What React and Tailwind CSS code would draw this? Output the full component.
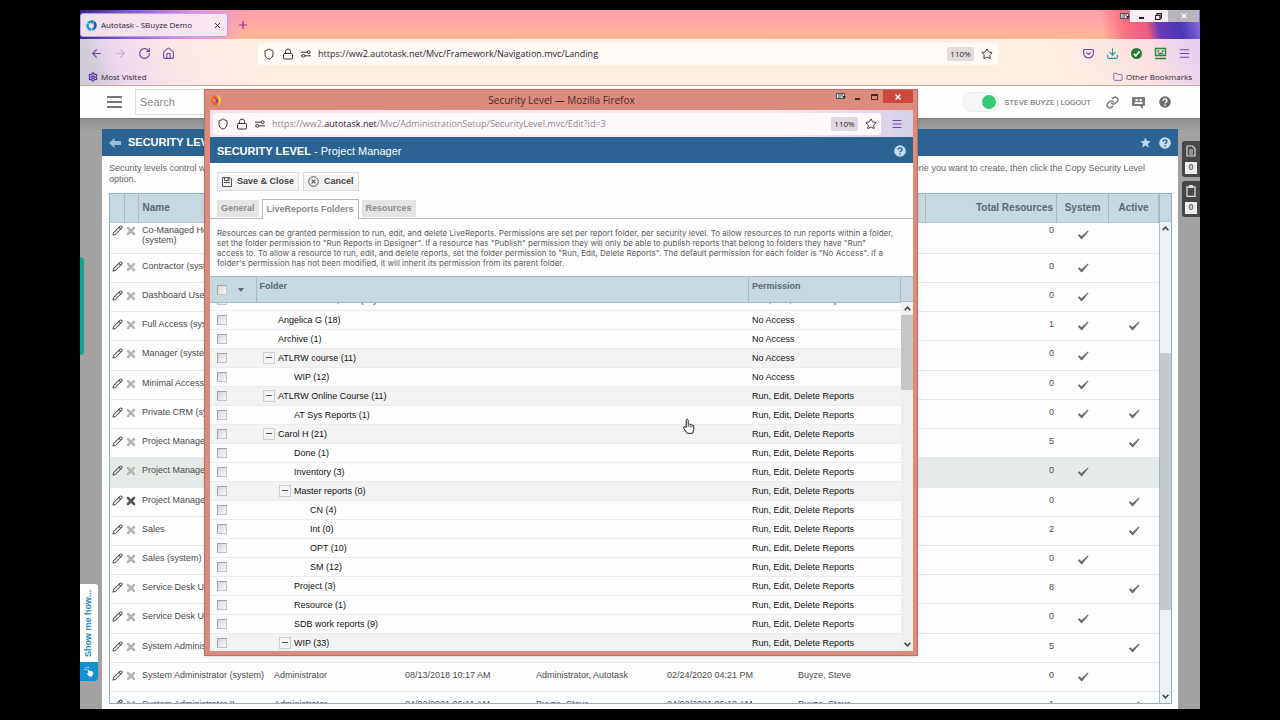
import {
  ArrowLeft,
  ArrowRight,
  Download,
  Folder,
  House,
  Link,
  Lock,
  Menu,
  Pencil,
  Plus,
  RotateCw,
  Settings,
  Shield,
  Star,
  X,
} from "lucide-react";

const levels = [
  { name: "Co-Managed Help Desk", second: "(system)", total: 0, system: true },
  { name: "Contractor (system)", total: 0, system: true },
  { name: "Dashboard User (system)", total: 0, system: true },
  { name: "Full Access (system)", total: 1, system: true, active: true },
  { name: "Manager (system)", total: 0, system: true },
  { name: "Minimal Access (system)", total: 0, system: true },
  { name: "Private CRM (system)", total: 0, system: true, active: true },
  { name: "Project Manager", total: 5, active: true },
  { name: "Project Manager (system)", total: 0, system: true, selected: true },
  { name: "Project Manager", total: 0, active: true, removable: true },
  { name: "Sales", total: 2, active: true },
  { name: "Sales (system)", total: 0, system: true },
  { name: "Service Desk User", total: 8, active: true },
  { name: "Service Desk User (system)", total: 0, system: true },
  { name: "System Administrator", total: 5, active: true },
  {
    name: "System Administrator (system)",
    cells: ["Administrator", "08/13/2018 10:17 AM", "Administrator, Autotask", "02/24/2020 04:21 PM", "Buyze, Steve"],
    total: 0,
    system: true,
  },
  {
    name: "System Administrator II",
    cells: ["Administrator", "04/02/2021 06:11 AM", "Buyze, Steve", "04/02/2021 06:12 AM", "Buyze, Steve"],
    total: 1,
    active: true,
  },
];

const RUN = "Run, Edit, Delete Reports";
const NONE = "No Access";

const folders = [
  { name: "Allends is First, Gid. (10)", depth: 0, permission: RUN },
  { name: "Angelica G (18)", depth: 0, permission: NONE },
  { name: "Archive (1)", depth: 0, permission: NONE },
  { name: "ATLRW course (11)", depth: 0, permission: NONE, open: true },
  { name: "WIP (12)", depth: 1, permission: NONE },
  { name: "ATLRW Online Course (11)", depth: 0, permission: RUN, open: true },
  { name: "AT Sys Reports (1)", depth: 1, permission: RUN },
  { name: "Carol H (21)", depth: 0, permission: RUN, open: true },
  { name: "Done (1)", depth: 1, permission: RUN },
  { name: "Inventory (3)", depth: 1, permission: RUN },
  { name: "Master reports (0)", depth: 1, permission: RUN, open: true },
  { name: "CN (4)", depth: 2, permission: RUN },
  { name: "Int (0)", depth: 2, permission: RUN },
  { name: "OPT (10)", depth: 2, permission: RUN },
  { name: "SM (12)", depth: 2, permission: RUN },
  { name: "Project (3)", depth: 1, permission: RUN },
  { name: "Resource (1)", depth: 1, permission: RUN },
  { name: "SDB work reports (9)", depth: 1, permission: RUN },
  { name: "WIP (33)", depth: 1, permission: RUN, open: true },
];

const indent = ["pl-[7px]", "pl-[23px]", "pl-[39px]"];

const checkboxClass =
  "block size-[10px] appearance-none border border-[#a2a2a2] border-r-[#c4c4c4] border-b-[#c4c4c4] bg-gradient-to-br from-[#d6d6d8] to-[#f8f8f8]";

function CheckMark() {
  return (
    <svg className="mx-auto h-[10px] w-3" viewBox="0 0 12 10" fill="#6b6b6b">
      <path d="M.8 5.2 2.4 4.2 4.4 6.2 10.8 .6 11.6 1.2 5 9.2H4.2Z" />
    </svg>
  );
}

function HelpIcon({ className, mark }) {
  return (
    <svg className={className} viewBox="0 0 12 12">
      <circle cx="6" cy="6" r="5.8" fill="currentColor" />
      <path d="M4.1 4.7C4.1 2.3 8 2.3 8 4.5 8 5.9 6.1 5.8 6.1 7.3" fill="none" stroke={mark} strokeWidth="1.4" />
      <circle cx="6.1" cy="9" r=".85" fill={mark} />
    </svg>
  );
}

function PermissionsIcon() {
  return (
    <svg className="h-2 w-[10px] shrink-0" viewBox="0 0 10 8" fill="none" stroke="#333" strokeWidth="1">
      <path d="M0 2.2H6M4 5.8H10M0 5.8H1" />
      <circle cx="7.7" cy="2.2" r="1.4" />
      <circle cx="2.4" cy="5.8" r="1.4" />
    </svg>
  );
}

function KeyboardIcon() {
  return (
    <svg className="h-[7px] w-[10px]" viewBox="0 0 10 7">
      <rect x=".5" y=".5" width="8" height="5" fill="#ddd" stroke="#555" />
      <path d="M2 2H7M2 4H5" stroke="#555" />
      <path d="M6 3 10 3 8 6Z" fill="#333" />
    </svg>
  );
}

function Chevron({ down }) {
  return (
    <svg className="h-[5px] w-[7px]" viewBox="0 0 7 5" fill="none" stroke="#444" strokeWidth="1.6">
      <path d={down ? "M.6 .8 3.5 3.8 6.4 .8" : "M.6 4.2 3.5 1.2 6.4 4.2"} />
    </svg>
  );
}

function BrowserChrome() {
  return (
    <div className="shrink-0 font-['Open_Sans','Noto_Sans',sans-serif] text-[8px] text-[#2b2233]">
      {/* Tab strip */}
      <div className="flex h-[29px] items-start bg-[linear-gradient(100deg,#2f2a80_0,#8a62d8_5%,#e58fdc_10%,rgba(255,160,175,0)_15%),linear-gradient(78deg,rgba(255,160,175,0)_91%,#fb6f80_93%,#ee5a7e_95%,#6a3ab5_96%,#4a36b8_98%,#8d6fe4_100%),linear-gradient(#ff9dae,#ffb795)]">
        <div className="mt-[3px] flex h-6 w-[148px] items-center rounded-[3px] border border-[#b9a0ec] bg-[#fbe9f0]/95 pr-[5px] pl-[5px]">
          <svg className="size-[11px]" viewBox="0 0 11 11" fill="none" strokeWidth="2.6">
            <circle cx="5.5" cy="5.5" r="3.9" stroke="#1d9ad6" />
            <path d="M5.5 1.6A3.9 3.9 0 0 1 8.2 8.2" stroke="#1b62ae" />
            <path d="M0 3 3 4M8 .5 7 4M6 11 5 8" stroke="#dcecf8" strokeWidth=".7" />
          </svg>
          <span className="ml-1 whitespace-nowrap">Autotask - SBuyze Demo</span>
          <button aria-label="Close tab" className="ml-auto">
            <X className="size-[9px]" strokeWidth={2.4} />
          </button>
        </div>
        <button aria-label="New tab" className="mt-[9px] ml-[9px] text-[#9a2fa8]">
          <Plus className="size-3" strokeWidth={2.4} />
        </button>
        <div className="ml-auto flex h-3 items-center pr-px">
          <KeyboardIcon />
          <div className="flex h-3 w-[38px] items-center justify-between bg-[#f6eef2] pr-[6px] pl-[9px]">
            <button aria-label="Minimize" className="mt-1 h-[2px] w-[5px] bg-[#222]" />
            <button aria-label="Restore">
              <svg className="size-[7px]" viewBox="0 0 7 7" fill="none" stroke="#222">
                <path d="M.5 2.5H5V6.5H.5ZM2 2.5V.7H6.5V5H5" strokeWidth="1.2" />
              </svg>
            </button>
          </div>
          <button aria-label="Close window" className="flex h-3 w-[31px] items-center justify-center bg-[#b9b5bc] text-white">
            <X className="size-2" strokeWidth={3.5} />
          </button>
        </div>
      </div>

      {/* Toolbar and bookmarks */}
      <div className="border-b border-[#c9a79b] bg-[linear-gradient(68deg,#cfccd6_0,#d2cdd9_2%,rgba(236,214,240,0.9)_4%,rgba(252,226,232,0.8)_9%,rgba(252,239,226,0)_18%),linear-gradient(65deg,#fdf0e2_86%,#fbdfe2_95%,#e2cdf3_100%)]">
        <div className="flex h-[29px] items-center">
          <div className="flex w-[178px] items-center gap-[11px] pl-[10px] text-[#6a45a6]">
            <ArrowLeft className="size-[13px]" />
            <ArrowRight className="size-[13px] opacity-30" />
            <RotateCw className="size-[13px]" />
            <House className="size-[13px]" />
          </div>
          <div className="flex h-[22px] flex-1 items-center gap-[7px] rounded-[3px] bg-[#fffaf6] pr-1 pl-[5px]">
            <Shield className="size-3" color="#333" />
            <Lock className="size-3" color="#333" />
            <PermissionsIcon />
            <input
              aria-label="Address"
              className="min-w-0 flex-1 bg-transparent text-[9px] outline-none"
              defaultValue="https://ww2.autotask.net/Mvc/Framework/Navigation.mvc/Landing"
            />
            <button className="h-[14px] w-[27px] rounded-[2px] bg-[#e2dcdb]">110%</button>
            <Star className="mr-px size-3" color="#333" />
          </div>
          <div className="flex w-[202px] items-center justify-end gap-[11px] pr-[9px]">
            <svg className="size-[13px]" viewBox="0 0 13 13" fill="none" stroke="#7a4cab" strokeWidth="1.2">
              <path d="M2.5 2.5H10.5Q11.5 2.5 11.4 3.5V6A4.9 4.9 0 0 1 1.6 6V3.5Q1.5 2.5 2.5 2.5ZM4.2 5.4 6.5 7.5 8.8 5.4" />
            </svg>
            <Download className="size-[13px]" color="#1aa095" />
            <svg className="size-[13px]" viewBox="0 0 13 13" fill="none">
              <circle cx="6.5" cy="6.5" r="5.5" fill="#257a31" />
              <path d="M3.8 6.8 5.8 8.7 9.5 4.4" stroke="#fff" strokeWidth="1.7" />
            </svg>
            <svg className="size-[13px]" viewBox="0 0 13 13" fill="none" stroke="#2b8636" strokeWidth="1.4">
              <path d="M1.5 1.5H11.5V8.5H1.5ZM1 11.5H12M3.8 6.5H9.2" />
              <path d="M4.3 3.2V5M8.7 3.2V5" strokeWidth="1.8" />
            </svg>
            <Menu className="size-[13px]" color="#6a45c0" />
          </div>
        </div>
        <div className="flex h-[17px] items-center pr-[8px] pl-[8px]">
          <Settings className="size-[10px]" color="#5533b0" strokeWidth={3} />
          <span className="ml-[3px]">Most Visited</span>
          <Folder className="ml-auto size-[10px]" color="#7a4cab" />
          <span className="ml-[3px]">Other Bookmarks</span>
        </div>
      </div>
    </div>
  );
}

function AppHeader() {
  return (
    <header className="flex h-8 shrink-0 items-center bg-[#fdfdfd] pr-[29px] pl-[27px] text-[#6b6b6b]">
      <button aria-label="Menu" className="flex w-[15px] flex-col gap-[3px]">
        <span className="h-[2px] bg-[#777]" />
        <span className="h-[2px] bg-[#777]" />
        <span className="h-[2px] bg-[#777]" />
      </button>
      <input
        aria-label="Search"
        placeholder="Search"
        className="ml-[13px] h-[26px] w-[200px] border border-[#dedede] px-1 text-[11px] placeholder-[#8a8a8a] outline-none"
      />
      <div className="ml-auto flex items-center">
        <label className="flex h-5 w-9 items-center justify-end rounded-full border border-[#ececec] bg-[#f7f7f5] pr-[2px]">
          <input type="checkbox" defaultChecked aria-label="Availability" className="size-[14px] appearance-none rounded-full bg-[#37c878]" />
        </label>
        <div className="ml-[6px] pt-[2px] font-[Roboto,sans-serif] text-[8px] whitespace-pre">
          <a href="#profile">STEVE BUYZE</a> | <a href="#logout">LOGOUT</a>
        </div>
        <Link className="ml-[15px] size-[13px]" color="#777" strokeWidth={2.6} />
        <svg className="ml-[13px] size-[13px]" viewBox="0 0 13 13" fill="#777">
          <path d="M1 1H12Q13 1 13 2V9Q13 10 12 10H11V13L8 10H1Q0 10 0 9V2Q0 1 1 1Z" />
          <g fill="#fdfdfd">
            <circle cx="4.6" cy="4" r="1.3" />
            <circle cx="8.6" cy="4" r="1.3" />
            <path d="M2.3 8Q2.3 5.7 4.6 5.7 6.2 5.7 6.6 7 7 5.7 8.6 5.7 10.8 5.7 10.8 8Z" />
          </g>
        </svg>
        <HelpIcon className="ml-[14px] size-3 text-[#6c6c6c]" mark="#fff" />
      </div>
    </header>
  );
}

function LevelColumns() {
  return (
    <colgroup>
      <col className="w-[14px]" />
      <col className="w-[14px]" />
      <col className="w-[132px]" />
      <col className="w-[131px]" />
      <col className="w-[131px]" />
      <col className="w-[131px]" />
      <col className="w-[131px]" />
      <col />
      <col className="w-[131px]" />
      <col className="w-[52px]" />
      <col className="w-[50px]" />
    </colgroup>
  );
}

function LevelsPanel() {
  return (
    <section className="flex min-h-0 flex-1 flex-col bg-[#fdfdfd]">
      <div className="flex h-[27px] shrink-0 items-center bg-[#2b6492] pr-[7px] pl-[7px] text-white">
        <svg className="h-[10px] w-3" viewBox="0 0 12 10" fill="#9dbdd6">
          <path d="M0 5 5.5 0V3H12V7H5.5V10Z" />
        </svg>
        <h1 className="ml-[7px] text-[11px] font-bold">SECURITY LEVELS</h1>
        <svg className="ml-auto size-[11px]" viewBox="0 0 24 24" fill="#bcd8ea">
          <path d="M12 1 15.2 8.6 23.5 9.3 17.2 14.6 19.2 22.8 12 18.4 4.8 22.8 6.8 14.6.5 9.3 8.8 8.6Z" />
        </svg>
        <HelpIcon className="ml-2 size-3 text-[#c5dff0]" mark="#2b6492" />
      </div>
      <div className="shrink-0 px-[7px] pt-[7px] text-[9px] leading-[11px] text-[#666]">
        <p className="flex justify-between pr-[26px]">
          <span>Security levels control what</span>
          <span>one you want to create, then click the Copy Security Level</span>
        </p>
        <p>option.</p>
      </div>
      <div className="mt-2 mr-[6px] mb-[5px] ml-[7px] flex min-h-0 flex-1 border border-[#8fb0c0]">
        <div className="flex min-w-0 flex-1 flex-col">
          <table className="w-full shrink-0 table-fixed border-collapse bg-[#c8d8e0] text-[10px] text-[#5a6870]">
            <LevelColumns />
            <thead>
              <tr className="h-7 border-b border-[#b4c8d2] *:border-r *:border-[#a5bcc8]">
                <th />
                <th />
                <th className="px-1 text-left">Name</th>
                <th />
                <th />
                <th />
                <th />
                <th />
                <th className="pr-[3px] text-right">Total Resources</th>
                <th>System</th>
                <th>Active</th>
              </tr>
            </thead>
          </table>
          <div className="min-h-0 flex-1 overflow-hidden">
            <table className="-mt-[5px] h-[504px] w-full table-fixed border-collapse text-[9px] leading-[10px] text-[#4b4b4b]">
              <LevelColumns />
              <tbody>
                {levels.map((level, i) => (
                  <tr
                    key={i}
                    className={`h-[29px] border-b border-[#e4e8ea] align-top ${level.selected ? "bg-[#e5ece8]" : ""}`}
                  >
                    <td className="pt-[7px]">
                      <button aria-label="Edit" className="mx-auto block">
                        <Pencil className="size-[11px]" color="#555" strokeWidth={2.2} />
                      </button>
                    </td>
                    <td className="pt-[7px]">
                      <button aria-label="Delete" className="ml-px block">
                        <X className="size-3" color={level.removable ? "#555" : "#b5b5b5"} strokeWidth={5} />
                      </button>
                    </td>
                    <td className={`px-1 pt-[7px] whitespace-nowrap ${level.second ? "pb-2" : ""}`}>
                      {level.name}
                      {level.second && <div>{level.second}</div>}
                    </td>
                    {(level.cells || ["", "", "", "", ""]).map((cell, j) => (
                      <td key={j} className="px-1 pt-[7px] whitespace-nowrap">
                        {cell}
                      </td>
                    ))}
                    <td className="pt-[7px] pr-[3px] text-right">{level.total}</td>
                    <td className="align-middle">{level.system && <CheckMark />}</td>
                    <td className="align-middle">{level.active && <CheckMark />}</td>
                  </tr>
                ))}
              </tbody>
            </table>
          </div>
        </div>
        <div className="flex w-3 flex-col border-l border-[#a5bcc8]">
          <div className="h-7 border-b border-[#b4c8d2] bg-[#c8d8e0]" />
          <div className="flex flex-1 flex-col items-center bg-[#eef1f4] py-1">
            <Chevron />
            <div className="mt-[122px] h-[257px] w-full bg-[#c5cacd]" />
            <div className="mt-auto">
              <Chevron down />
            </div>
          </div>
        </div>
      </div>
    </section>
  );
}

function FolderColumns() {
  return (
    <colgroup>
      <col className="w-[46px]" />
      <col />
      <col className="w-[152px]" />
    </colgroup>
  );
}

function DialogTab({ children, active }) {
  return (
    <button
      className={`px-1 text-[9px] font-bold whitespace-nowrap text-[#8a8a8a] ${
        active ? "-mb-px h-5 border border-b-0 border-[#b8b8b8] bg-white" : "mb-px h-[17px] bg-[#e4e4e4]"
      }`}
    >
      {children}
    </button>
  );
}

function SecurityDialog() {
  return (
    <div
      role="dialog"
      aria-label="Security Level"
      className="absolute top-[79px] right-[282px] bottom-[53px] left-[124px] flex flex-col border border-[#b96f63] bg-[#db8c7c] pr-[4px] pb-[4px] pl-[5px] shadow-sm"
    >
      {/* Title bar */}
      <div className="flex h-5 shrink-0 font-['Open_Sans','Noto_Sans',sans-serif] text-[10px] text-[#4a2823]">
        <div className="flex flex-1 items-center">
          <svg className="size-3" viewBox="0 0 12 12">
            <circle cx="6" cy="6.4" r="5.2" fill="#f2622d" />
            <path d="M6 1.2Q11 1 11.2 6 11 10.5 7 11.5 10 7 6 1.2Z" fill="#ffc23d" />
            <circle cx="6" cy="6.6" r="2.4" fill="#7a3fae" />
            <path d="M1.2 3.2Q3 3.4 3.6 5L6 5.2Q4.6 7 6.6 8.4 3 8.8 2.4 6Z" fill="#ff9130" />
          </svg>
        </div>
        <span className="self-center whitespace-nowrap">Security Level — Mozilla Firefox</span>
        <div className="flex flex-1 items-start justify-end">
          <div className="mr-[5px] flex h-[13px] items-center gap-[9px]">
            <KeyboardIcon />
            <button aria-label="Minimize" className="mt-1 h-[2px] w-[5px] bg-[#4a2823]" />
            <button aria-label="Maximize" className="ml-[2px] h-[6px] w-[7px] border border-t-2 border-[#4a2823]" />
          </div>
          <button aria-label="Close" className="flex h-[13px] w-[30px] items-center justify-center bg-[#cb4a40] text-white">
            <X className="size-2" strokeWidth={4} />
          </button>
        </div>
      </div>

      <div className="flex min-h-0 flex-1 flex-col bg-[#fdfdfd]">
        {/* Address bar */}
        <div className="flex h-[27px] shrink-0 items-center bg-[linear-gradient(90deg,#ece2f8_0,#f9e4ec_10%,#fbe9e6_80%,#e6d8f4_93%,#d3cfe6_100%)] pr-[10px] pl-[3px] font-['Open_Sans','Noto_Sans',sans-serif] text-[9px]">
          <div className="flex h-[22px] flex-1 items-center gap-[7px] rounded-[3px] bg-[#fdf8fa] pr-1 pl-1">
            <Shield className="size-3" color="#333" />
            <Lock className="size-3" color="#333" />
            <PermissionsIcon />
            <span className="flex-1 text-[#8d8891]">
              https://ww2.<span className="text-[#2b2233]">autotask.net</span>/Mvc/AdministrationSetup/SecurityLevel.mvc/Edit?id=3
            </span>
            <button className="h-[14px] w-[27px] rounded-[2px] bg-[#e0d8de] text-[8px] text-[#2b2233]">110%</button>
            <Star className="size-3" color="#333" />
          </div>
          <Menu className="ml-[10px] size-3" color="#6a45c0" />
        </div>

        <div className="flex h-[26px] shrink-0 items-center bg-[#2b6492] px-[7px] pt-[2px] text-[11px] whitespace-pre text-white">
          <h2>
            <b>SECURITY LEVEL</b> - Project Manager
          </h2>
          <HelpIcon className="ml-auto size-3 text-[#c5dff0]" mark="#2b6492" />
        </div>

        <div className="flex shrink-0 gap-1 px-[7px] pt-[9px] text-[9px] font-bold text-[#444] *:flex *:h-[19px] *:items-center *:gap-[5px] *:border *:border-[#dcdcdc] *:bg-gradient-to-b *:from-[#fafafa] *:to-[#efefef] *:px-1">
          <button>
            <svg className="size-[10px]" viewBox="0 0 10 10" fill="none" stroke="#555">
              <path d="M.5 .5H8L9.5 2V9.5H.5ZM2.5 .5V3.5H7V.5M2 5.5H8" />
              <path d="M6 1V3" />
            </svg>
            Save &amp; Close
          </button>
          <button>
            <svg className="size-[11px]" viewBox="0 0 11 11" fill="none" stroke="#555">
              <circle cx="5.5" cy="5.5" r="4.8" />
              <path d="M3.6 3.6 7.4 7.4M7.4 3.6 3.6 7.4" strokeWidth="1.2" />
            </svg>
            Cancel
          </button>
        </div>

        <div className="mt-2 flex shrink-0 items-end gap-[3px] border-b border-[#b8b8b8] px-[7px]">
          <DialogTab>General</DialogTab>
          <DialogTab active>LiveReports Folders</DialogTab>
          <DialogTab>Resources</DialogTab>
        </div>

        <p className="shrink-0 px-[7px] pt-[9px] pb-2 font-[Inter,sans-serif] text-[8px] leading-[10px] whitespace-nowrap text-[#5c5c5c]">
          Resources can be granted permission to run, edit, and delete LiveReports. Permissions are set per report folder, per security level. To allow resources to run reports within a folder,
          <br />
          set the folder permission to "Run Reports in Designer". If a resource has "Publish" permission they will only be able to publish reports that belong to folders they have "Run"
          <br />
          access to. To allow a resource to run, edit, and delete reports, set the folder permission to "Run, Edit, Delete Reports". The default permission for each folder is "No Access". If a
          <br />
          folder's permission has not been modified, it will inherit its permission from its parent folder.
        </p>

        {/* Folder list */}
        <div className="flex min-h-0 flex-1">
          <div className="flex min-w-0 flex-1 flex-col">
            <table className="w-full shrink-0 table-fixed border-collapse bg-[#c8d8e0] text-[9px] text-[#5a6870]">
              <FolderColumns />
              <thead>
                <tr className="h-[26px] border-y border-[#a5bcc8] text-left *:border-r *:border-[#a5bcc8]">
                  <th className="pl-[7px]">
                    <div className="flex items-center gap-[11px]">
                      <input type="checkbox" aria-label="Select all" className={checkboxClass} />
                      <span className="border-x-[3px] border-t-4 border-x-transparent border-t-[#667]" />
                    </div>
                  </th>
                  <th className="px-[3px] pb-[6px]">Folder</th>
                  <th className="px-[3px] pb-[6px]">Permission</th>
                </tr>
              </thead>
            </table>
            <div className="min-h-0 flex-1 overflow-hidden">
              <table className="-mt-3 w-full table-fixed border-collapse text-[9px] leading-[10px] text-[#111]">
                <FolderColumns />
                <tbody>
                  {folders.map((folder) => (
                    <tr key={folder.name} className={`h-[19px] border-b border-[#ececee] ${folder.open ? "bg-[#f3f3f4]" : ""}`}>
                      <td className="pl-[7px]">
                        <input type="checkbox" aria-label={folder.name} className={checkboxClass} />
                      </td>
                      <td className={indent[folder.depth]}>
                        <div className="flex items-center gap-[3px]">
                          {folder.open ? (
                            <button
                              aria-label="Collapse"
                              className="flex size-[12px] items-center justify-center border border-[#cfcfcf] bg-[#f4f4f4]"
                            >
                              <span className="h-px w-[6px] bg-[#555]" />
                            </button>
                          ) : (
                            <span className="w-3" />
                          )}
                          {folder.name}
                        </div>
                      </td>
                      <td className="px-[3px]">{folder.permission}</td>
                    </tr>
                  ))}
                </tbody>
              </table>
            </div>
          </div>
          <div className="flex w-3 flex-col">
            <div className="h-[26px] border-y border-[#a5bcc8] bg-[#c8d8e0]" />
            <div className="flex flex-1 flex-col items-center bg-[#efefef] py-1">
              <Chevron />
              <div className="mt-1 h-[75px] w-full bg-[#c6c6c6]" />
              <div className="mt-auto">
                <Chevron down />
              </div>
            </div>
          </div>
        </div>
      </div>
    </div>
  );
}

function SideGadgets() {
  return (
    <>
      <div className="absolute top-[131px] right-0 flex flex-col gap-1 text-[9px] font-bold text-[#666]">
        <button className="flex h-9 w-[18px] flex-col items-center justify-between rounded-l-[3px] bg-[#474747] pt-1 pb-[3px]">
          <svg className="h-3 w-[10px]" viewBox="0 0 10 12" fill="none" stroke="#ddd" strokeWidth="1.2">
            <path d="M1 1H6.5L9 3.5V11H1ZM3 5H7M3 7H7M3 9H7" />
          </svg>
          <span className="flex h-3 w-3 items-center justify-center bg-[#eee]">0</span>
        </button>
        <button className="flex h-9 w-[18px] flex-col items-center justify-between rounded-l-[3px] bg-[#474747] pt-1 pb-[3px]">
          <svg className="h-3 w-[10px]" viewBox="0 0 10 12" fill="none" stroke="#ddd" strokeWidth="1.3">
            <path d="M1 2H9V11.3H1Z" />
            <path d="M3 1.5H7" strokeWidth="3" />
          </svg>
          <span className="flex h-3 w-3 items-center justify-center bg-[#eee]">0</span>
        </button>
      </div>
      <div className="absolute top-[247px] left-0 h-[98px] w-1 rounded-r bg-[#1aa08c]" />
      <button className="absolute top-[574px] left-0 flex w-[18px] flex-col overflow-hidden rounded-r-[3px] bg-white text-[9px] font-bold text-[#2590c0]">
        <span className="flex h-[78px] w-full rotate-180 items-center justify-center whitespace-nowrap [writing-mode:vertical-rl]">
          Show me how...
        </span>
        <span className="flex h-[19px] w-full items-center justify-center bg-[#1490d0]">
          <svg className="size-[11px]" viewBox="0 0 11 11" fill="#fff">
            <path d="M3.2 3 6.2 5.2 7.6 4.8 9.4 7 8 10.5H5.2L2.6 7.4 4.6 7.2Z" />
            <path d="M2 1 2.7 2.2M4.2 .5V2M.5 3.2 2 3.6" stroke="#fff" strokeWidth=".8" />
          </svg>
        </span>
      </button>
    </>
  );
}

function HandCursor() {
  return (
    <svg className="absolute top-[408px] left-[603px] h-4 w-3" viewBox="0 0 12 16">
      <path
        d="M3.2 9.5V2Q4.2 .2 5.2 2V6.2Q6.4 5.2 7 6.6 8.2 5.8 8.8 7.2 10.2 6.6 10.8 8V11.4L9.6 15.3H4.2L1 10.6Q.2 8.4 1.8 8.6Z"
        fill="#fff"
        stroke="#222"
      />
      <path d="M5.2 6.4V9M7.1 7V9.4M8.9 7.6V9.6" stroke="#222" strokeWidth=".8" />
    </svg>
  );
}

export default function App() {
  return (
    <div className="h-screen bg-black px-20 pt-[10px] pb-[11px] font-['Liberation_Sans',Arial,sans-serif]">
      <div className="relative flex h-full flex-col overflow-hidden">
        <BrowserChrome />
        <AppHeader />
        <main className="flex min-h-0 flex-1 flex-col border-t border-[#777] bg-[linear-gradient(#8f8f8f,#a2a2a2_12px)] px-[22px] pt-[10px]">
          <LevelsPanel />
        </main>
        <SideGadgets />
        <SecurityDialog />
        <HandCursor />
      </div>
    </div>
  );
}
